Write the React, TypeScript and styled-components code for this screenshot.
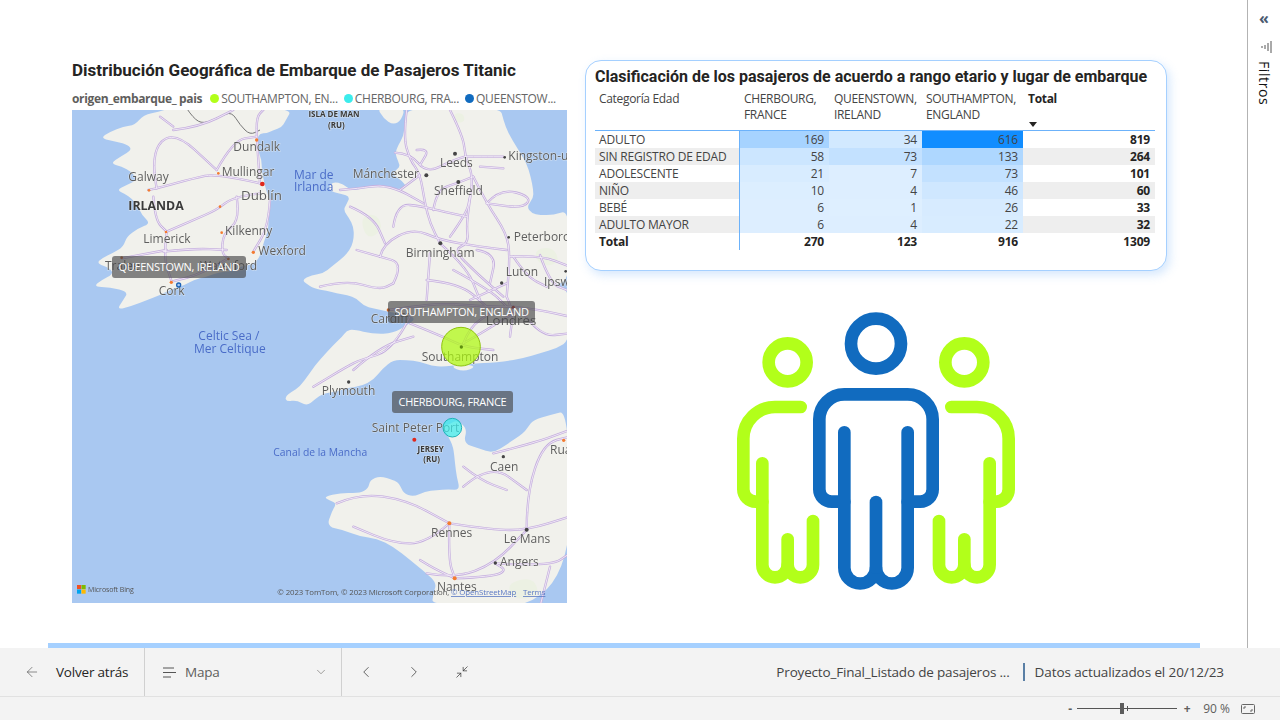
import React from "react";
import styled, { createGlobalStyle } from "styled-components";
import { ArrowLeft, ChevronDown, ChevronLeft, ChevronRight, Minimize2 } from "lucide-react";

const UI_FONT = `"Open Sans", "Noto Sans", sans-serif`;
const TITLE_FONT = `Roboto, "Liberation Sans", sans-serif`;

const GlobalStyle = createGlobalStyle`
  html, body {
    margin: 0;
    padding: 0;
    background: #fff;
    overflow: hidden;
  }
  * {
    box-sizing: border-box;
  }
`;

const Page = styled.div`
  width: 1280px;
  height: 720px;
  display: flex;
  flex-direction: column;
  font-family: ${UI_FONT};
  color: #252423;
`;

const Workspace = styled.div`
  height: 648px;
  display: flex;
`;

const Canvas = styled.main`
  flex: 1;
  display: flex;
  flex-direction: column;
`;

const Columns = styled.div`
  flex: 1;
  display: flex;
  gap: 18px;
  padding: 60px 0 0 72px;
`;

const LeftColumn = styled.section`
  width: 495px;
`;

const RightColumn = styled.section`
  width: 582px;
`;

const ChartTitle = styled.h2`
  margin: 0;
  font-family: ${TITLE_FONT};
  font-weight: 700;
  font-size: 17px;
  line-height: 20px;
  color: #252423;
  white-space: nowrap;
`;

const Legend = styled.div`
  display: flex;
  align-items: center;
  height: 20px;
  margin-top: 8px;
  font-size: 12px;
  letter-spacing: -0.3px;
  color: #666;
  white-space: nowrap;
`;

const LegendName = styled.span`
  font-weight: 700;
  letter-spacing: -0.35px;
  color: #605e5c;
  margin-right: 8px;
`;

const LegendItem = styled.span`
  display: flex;
  align-items: center;
  gap: 2px;
  margin-right: 6px;
`;

const LegendDot = styled.i<{ $color: string }>`
  width: 9px;
  height: 9px;
  border-radius: 50%;
  background: ${(p) => p.$color};
`;

const MapFrame = styled.div`
  position: relative;
  width: 495px;
  height: 493px;
  margin-top: 2px;
  overflow: hidden;
`;

const MapSvg = styled.svg`
  display: block;
  width: 495px;
  height: 493px;
  filter: blur(0.35px);
`;

const MapTip = styled.div<{ $x: number; $y: number; $w: number }>`
  position: absolute;
  left: ${(p) => p.$x}px;
  top: ${(p) => p.$y}px;
  width: ${(p) => p.$w}px;
  height: 22px;
  border-radius: 3px;
  background: rgba(70, 70, 72, 0.65);
  color: #fff;
  font-size: 11px;
  letter-spacing: -0.3px;
  line-height: 22px;
  text-align: center;
  white-space: nowrap;
`;

const TableCard = styled.div`
  height: 211px;
  border: 1px solid #a5d0ff;
  border-radius: 16px;
  background: #fff;
  box-shadow: 3px 4px 10px rgba(120, 180, 250, 0.3);
  padding: 6px 11px 0 9px;
`;

const CardTitle = styled(ChartTitle)`
  font-size: 16px;
`;

const Table = styled.table`
  width: 560px;
  margin-top: 4px;
  border-collapse: collapse;
  table-layout: fixed;
  font-size: 12px;
  letter-spacing: -0.2px;
  color: #333;
`;

const HeadCell = styled.th<{ $bold?: boolean }>`
  height: 39px;
  padding: 0 2px 0 5px;
  font-weight: ${(p) => (p.$bold ? 700 : 400)};
  line-height: 16px;
  letter-spacing: -0.32px;
  text-align: left;
  vertical-align: top;
  color: ${(p) => (p.$bold ? "#252423" : "#444")};
  border-bottom: 1px solid #6cb2fa;
  position: relative;

  &:first-child,
  &:nth-child(4) {
    padding-left: 4px;
  }
`;

const SortMark = styled.span`
  position: absolute;
  left: 6px;
  bottom: 3px;
  width: 0;
  height: 0;
  border-left: 4px solid transparent;
  border-right: 4px solid transparent;
  border-top: 5px solid #252423;
`;

const Row = styled.tr`
  height: 17px;
`;

const LabelCell = styled.td<{ $striped?: boolean; $bold?: boolean }>`
  padding: 0 0 0 4px;
  line-height: 17px;
  white-space: nowrap;
  font-weight: ${(p) => (p.$bold ? 700 : 400)};
  color: ${(p) => (p.$bold ? "#252423" : "#444")};
  background: ${(p) => (p.$striped ? "#eeeeee" : "transparent")};
  border-right: 1px solid #6cb2fa;
`;

const ValueCell = styled.td<{ $bg?: string; $bold?: boolean }>`
  padding: 0 5px 0 0;
  line-height: 17px;
  text-align: right;
  font-weight: ${(p) => (p.$bold ? 700 : 400)};
  color: ${(p) => (p.$bold ? "#252423" : "#444")};
  background: ${(p) => p.$bg ?? "transparent"};
`;

const PeopleIcon = styled.svg`
  display: block;
  width: 310px;
  height: 300px;
  margin: 29px 0 0 135px;
`;

const ProgressBar = styled.div`
  width: 1152px;
  height: 5px;
  margin-left: 48px;
  background: #a5d0ff;
`;

const FilterPane = styled.aside`
  width: 33px;
  border-left: 1px solid #b3b3b3;
  display: flex;
  flex-direction: column;
  align-items: center;
  padding-top: 11px;
`;

const CollapseMark = styled.span`
  height: 14px;
  font-size: 16px;
  font-weight: 700;
  line-height: 14px;
  color: #4a5a70;
`;

const FunnelIcon = styled.svg`
  display: block;
  width: 12px;
  height: 12px;
  margin: 16px 0 0 6px;
`;

const FilterLabel = styled.span`
  writing-mode: vertical-rl;
  margin-top: 8px;
  font-size: 14px;
  font-weight: 500;
  line-height: 18px;
  letter-spacing: 0.6px;
  color: #111;
`;

const BottomBar = styled.footer`
  height: 72px;
  background: #f3f3f3;
  display: flex;
  flex-direction: column;
`;

const NavRow = styled.nav`
  height: 49px;
  display: flex;
  align-items: stretch;
  border-bottom: 1px solid #e1e1e1;
`;

const BackButton = styled.div`
  width: 145px;
  display: flex;
  align-items: center;
  gap: 16px;
  padding-left: 24px;
  border-right: 1px solid #d0d0d0;
  font-size: 13.5px;
  letter-spacing: -0.2px;
  color: #252423;
`;

const PageSelect = styled.div`
  width: 197px;
  display: flex;
  align-items: center;
  padding: 0 13px 0 18px;
  border-right: 1px solid #d0d0d0;
  font-size: 13.5px;
  letter-spacing: -0.2px;
  color: #605e5c;
`;

const PageName = styled.span`
  flex: 1;
  margin-left: 9px;
`;

const ListIcon = styled.svg`
  display: block;
  width: 13px;
  height: 11px;
`;

const IconButton = styled.div`
  width: 48px;
  display: flex;
  align-items: center;
  justify-content: center;
  color: #555;
`;

const ReportInfo = styled.div`
  margin-left: auto;
  display: flex;
  align-items: center;
  padding-right: 56px;
  font-size: 13.5px;
  letter-spacing: -0.1px;
  color: #444;
`;

const ReportName = styled.span`
  letter-spacing: -0.18px;
`;

const InfoDivider = styled.i`
  width: 2px;
  height: 18px;
  margin: 0 10px 0 13px;
  background: #5a7fa5;
`;

const ZoomRow = styled.div`
  flex: 1;
  display: flex;
  align-items: center;
  justify-content: flex-end;
  padding-right: 25px;
  font-size: 12px;
  color: #605e5c;
`;

const ZoomSign = styled.span`
  width: 10px;
  text-align: center;
  font-weight: 700;
  line-height: 14px;
`;

const ZoomTrack = styled.div`
  position: relative;
  width: 100px;
  height: 1px;
  margin: 0 5px 0 2px;
  background: #555;
`;

const ZoomThumb = styled.i`
  position: absolute;
  left: 43px;
  top: -5px;
  width: 4px;
  height: 11px;
  background: #5c5c5c;
`;

const ZoomTick = styled.i`
  position: absolute;
  left: 50px;
  top: -2px;
  width: 1px;
  height: 5px;
  background: #555;
`;

const ZoomValue = styled.span`
  margin: 0 11px 0 11px;
`;

const FitIcon = styled.svg`
  display: block;
  width: 14px;
  height: 10px;
`;

// map drawing works in 3x coordinates, viewBox maps them onto the 495x493 frame
const smooth = (raw: string, close = true) => {
  const p = raw.trim().split(/\s+/).map((s) => s.split(",").map(Number));
  const mid = (a: number[], b: number[]) => `${(a[0] + b[0]) / 2} ${(a[1] + b[1]) / 2}`;
  if (close) {
    let d = `M${mid(p[p.length - 1], p[0])}`;
    p.forEach((c, i) => {
      d += ` Q${c[0]} ${c[1]} ${mid(c, p[(i + 1) % p.length])}`;
    });
    return d + "Z";
  }
  let d = `M${p[0][0]} ${p[0][1]}`;
  for (let i = 1; i < p.length - 1; i++) d += ` Q${p[i][0]} ${p[i][1]} ${mid(p[i], p[i + 1])}`;
  return d + ` L${p[p.length - 1][0]} ${p[p.length - 1][1]}`;
};

const LAND = [
  // Ireland
  "340,170 300,185 250,195 225,225 190,230 150,245 120,265 170,275 205,285 215,300 185,318 150,340 185,350 215,365 232,390 200,405 170,420 195,432 215,445 235,470 245,495 272,520 235,535 200,560 190,590 160,608 125,625 110,640 150,655 160,672 125,690 100,710 150,712 205,725 190,750 170,780 215,768 262,750 300,735 340,715 375,705 400,690 440,680 480,665 510,665 540,650 570,645 595,630 605,600 612,575 625,540 625,510 632,470 630,450 618,420 612,395 605,360 605,330 590,290 592,265 600,250 620,250 640,240 665,232 675,215 700,170",
  // Great Britain
  "1040,170 1035,220 1030,260 1015,285 1005,310 1015,335 1020,350 1005,362 1000,375 1025,392 1040,410 1015,418 1000,415 965,405 930,410 900,418 870,420 850,402 820,395 806,410 812,424 845,432 870,440 860,462 850,480 868,505 880,530 882,560 875,590 860,612 840,630 815,650 790,670 755,675 725,690 745,705 762,716 800,722 830,730 862,735 890,745 912,768 940,775 985,785 1040,795 1068,806 1040,826 1000,850 940,852 880,838 860,842 845,862 825,880 770,940 745,975 720,1010 695,1025 675,1040 680,1055 710,1050 740,1068 765,1048 790,1030 830,1025 870,1012 905,1008 940,990 968,955 1000,930 1040,930 1080,935 1115,948 1150,950 1200,945 1250,940 1290,938 1330,935 1390,925 1440,910 1490,895 1530,870 1530,720 1480,705 1530,690 1530,480 1480,495 1440,495 1415,490 1400,470 1420,445 1420,420 1412,380 1400,340 1372,295 1345,250 1330,210 1320,170",
  // northern France
  "1530,1080 1470,1095 1420,1110 1405,1130 1390,1150 1345,1180 1300,1210 1255,1195 1210,1180 1222,1135 1190,1110 1170,1122 1150,1130 1165,1160 1180,1190 1185,1240 1190,1280 1200,1320 1165,1318 1130,1320 1095,1325 1060,1340 1030,1330 1018,1300 1000,1290 960,1278 930,1290 925,1315 900,1330 845,1328 790,1340 810,1352 830,1360 815,1385 800,1430 850,1440 900,1460 950,1465 1000,1490 1050,1530 1100,1570 1130,1600 1120,1630 1115,1670 1530,1670",
  // Galloway
  "950,170 970,205 1000,225 1025,210 1035,170",
  // Wight
  "1170,950 1210,942 1250,950 1210,965",
];

const GREENS = [
  "1180,190 1210,190 1215,215 1190,220",
  "900,500 950,490 970,540 920,570",
  "1420,600 1480,590 1500,640 1440,650",
  "1340,1600 1420,1580 1440,1640 1360,1650",
];

const ROADS = [
  "600,400 470,370 400,385 290,415 265,420",
  "600,430 520,440 470,480 400,510 320,545",
  "320,545 310,620 335,695",
  "530,440 540,510 490,550 485,610 505,625",
  "630,450 625,530 580,605",
  "600,400 590,270 590,200 610,180",
  "505,625 430,670 335,695",
  "320,600 185,625",
  "310,605 400,595 500,600",
  "290,415 270,310 340,240 470,360",
  "340,240 420,230 520,180",
  "340,230 300,200",
  "470,360 520,270 590,260",
  "280,440 285,510 320,545",
  "1040,180 1030,260 1050,330 1080,370 1095,460 1110,520 1140,580",
  "1170,180 1210,260 1215,320 1240,380 1225,480 1220,530 1225,580 1180,600 1250,670 1330,740",
  "1215,320 1270,320 1330,320",
  "1260,350 1330,355",
  "1005,308 1050,310 1100,370 1180,330 1215,320",
  "1070,300 1110,295 1080,345",
  "1020,420 1080,375",
  "1240,380 1280,460 1340,550 1350,620 1340,740",
  "1280,460 1320,415 1415,440 1390,475 1280,460",
  "840,420 900,415 960,405 1020,420 1090,460",
  "1000,530 1010,460 1090,470 1130,480 1220,500",
  "960,620 970,580 1060,535 1140,570 1260,590 1340,600",
  "1110,610 1100,750",
  "1140,580 1220,650 1260,750",
  "1350,620 1440,615 1530,650",
  "1230,750 1340,700",
  "1120,480 1130,420 1190,400 1240,380",
  "1170,560 1220,490 1230,440",
  "1250,600 1310,610 1290,700",
  "1440,615 1470,700 1520,720",
  "1360,620 1400,680 1460,710",
  "1180,660 1290,720 1340,770",
  "1100,690 1200,700 1280,770",
  "985,780 1060,770 1150,760 1280,770 1360,770",
  "1360,790 1280,840 1210,880",
  "1360,770 1440,780 1530,800",
  "1340,740 1360,780 1350,860",
  "1390,790 1440,860 1530,850",
  "1050,800 1000,900 900,930 860,950 760,1010",
  "1050,820 1150,860 1210,890 1300,900",
  "1000,700 1030,640 960,620",
  "780,710 860,690 960,720 1000,700",
  "880,960 960,890 1060,860",
  "1210,880 1230,830 1290,790",
  "870,470 940,500 975,580",
  "890,600 960,620",
  "830,1360 900,1330 1040,1350 1168,1420",
  "1168,1420 1100,1480 1000,1480 880,1430",
  "1168,1420 1165,1530 1185,1585",
  "1100,1570 1185,1585 1305,1540 1400,1440",
  "1168,1420 1300,1440 1400,1440 1530,1400",
  "1400,1440 1400,1330 1450,1180 1530,1160",
  "1210,1310 1290,1240 1400,1320",
  "1300,1210 1420,1180 1530,1140",
  "1305,1540 1470,1550 1530,1510",
  "1470,1550 1440,1670",
  "1185,1585 1300,1580 1340,1560 1305,1540",
  "1185,1585 1130,1560 1080,1530",
  "1210,1250 1260,1290 1340,1320",
];

type MapLabel = { t: string; x: number; y: number; s?: number; blue?: boolean; bold?: boolean; mid?: boolean };

const MAP_TEXT: MapLabel[] = [
  { t: "ISLA DE MAN", x: 822, y: 202, s: 24, bold: true, mid: true },
  { t: "(RU)", x: 829, y: 233, s: 24, bold: true, mid: true },
  { t: "Dundalk", x: 520, y: 302 },
  { t: "Mullingar", x: 485, y: 378 },
  { t: "Galway", x: 205, y: 393 },
  { t: "Dublín", x: 543, y: 450, s: 40 },
  { t: "IRLANDA", x: 205, y: 480, s: 37, bold: true },
  { t: "Limerick", x: 250, y: 578 },
  { t: "Kilkenny", x: 495, y: 556 },
  { t: "Wexford", x: 595, y: 615 },
  { t: "Tralee", x: 135, y: 660 },
  { t: "Waterford", x: 420, y: 660 },
  { t: "Cork", x: 296, y: 736 },
  { t: "Mar de", x: 702, y: 386, blue: true },
  { t: "Irlanda", x: 702, y: 423, blue: true },
  { t: "Mánchester", x: 878, y: 383 },
  { t: "Leeds", x: 1140, y: 350 },
  { t: "Sheffield", x: 1122, y: 436 },
  { t: "Kingston-upon", x: 1345, y: 330 },
  { t: "Peterborough", x: 1361, y: 572 },
  { t: "Birmingham", x: 1037, y: 620 },
  { t: "Luton", x: 1337, y: 678 },
  { t: "Ipswich", x: 1452, y: 707 },
  { t: "Cardiff", x: 932, y: 818 },
  { t: "Londres", x: 1277, y: 825, s: 40 },
  { t: "Celtic Sea /", x: 415, y: 870, blue: true },
  { t: "Mer Celtique", x: 402, y: 910, blue: true },
  { t: "Southampton", x: 1085, y: 933 },
  { t: "Plymouth", x: 785, y: 1036 },
  { t: "Saint Peter Port", x: 935, y: 1145 },
  { t: "JERSEY", x: 1112, y: 1206, s: 24, bold: true, mid: true },
  { t: "(RU)", x: 1115, y: 1236, s: 24, bold: true, mid: true },
  { t: "Canal de la Mancha", x: 640, y: 1217, blue: true, s: 31 },
  { t: "Caen", x: 1290, y: 1262 },
  { t: "Ruan", x: 1470, y: 1212 },
  { t: "Rennes", x: 1113, y: 1460 },
  { t: "Le Mans", x: 1331, y: 1478 },
  { t: "Angers", x: 1320, y: 1548 },
  { t: "Nantes", x: 1131, y: 1622 },
];

const MAP_DOTS = [
  [590, 270, 5, "#f47b30"], [475, 370, 4, "#f47b30"], [607, 402, 7, "#e0281c"], [267, 421, 4, "#f47b30"],
  [480, 470, 4, "#f47b30"], [318, 546, 4, "#f47b30"], [485, 548, 4, "#f47b30"], [580, 607, 5, "#f47b30"],
  [185, 623, 4, "#c8632a"], [505, 627, 4, "#c8632a"], [334, 697, 5, "#f47b30"], [1185, 311, 6, "#444"],
  [1099, 376, 6, "#444"], [1195, 396, 6, "#444"], [1334, 322, 4, "#444"], [1346, 562, 4, "#444"],
  [1141, 580, 6, "#444"], [1325, 699, 5, "#444"], [1517, 664, 4, "#444"], [985, 780, 5, "#c8632a"],
  [1360, 772, 5, "#c0392b"], [866, 996, 5, "#444"], [1063, 1169, 6, "#e0281c"],
  [1330, 1220, 5, "#444"], [1511, 1171, 5, "#f47b30"], [1168, 1420, 6, "#f47b30"], [1400, 1439, 6, "#444"],
  [1306, 1539, 5, "#444"], [1184, 1585, 6, "#f47b30"],
] as const;

const MapText = styled.text<{ $s: number; $blue?: boolean; $bold?: boolean; $mid?: boolean }>`
  font-family: ${UI_FONT};
  font-size: ${(p) => p.$s}px;
  font-weight: ${(p) => (p.$bold ? 700 : 400)};
  fill: ${(p) => (p.$blue ? "#4a6cc8" : p.$bold ? "#3a3a3a" : "#5e5e5e")};
  text-anchor: ${(p) => (p.$mid ? "middle" : "start")};
  stroke: ${(p) => (p.$blue ? "none" : "rgba(245,245,240,.55)")};
  stroke-width: 3px;
  paint-order: stroke;
`;

const MapCaption = styled.text<{ $link?: boolean; $s?: number }>`
  font-family: ${UI_FONT};
  font-size: ${(p) => p.$s ?? 23.5}px;
  fill: ${(p) => (p.$link ? "#5a78c4" : "#555")};
  text-decoration: ${(p) => (p.$link ? "underline" : "none")};
  letter-spacing: -0.3px;
`;

const Road = styled.path<{ $core?: boolean }>`
  fill: none;
  stroke: ${(p) => (p.$core ? "#f6f1fa" : "#c4aedd")};
  stroke-width: ${(p) => (p.$core ? 2.5 : 7)};
  stroke-linecap: round;
  stroke-linejoin: round;
`;

const MapBackdrop = () => (
  <MapSvg viewBox="36 180 1485 1479" aria-hidden>
    <rect x="36" y="180" width="1485" height="1479" fill="#a9c8f1" />
    {LAND.map((d, i) => (
      <path key={i} d={smooth(d)} fill="#f1f1ec" />
    ))}
    {GREENS.map((d, i) => (
      <path key={i} d={smooth(d)} fill="#ecf1e3" />
    ))}
    <path d={smooth("380,175 400,205 430,222 480,200 515,185 540,225 570,255 600,240", false)} fill="none" stroke="#777" strokeWidth="3" />
    {ROADS.map((d, i) => (
      <Road key={i} d={smooth(d, false)} />
    ))}
    {ROADS.map((d, i) => (
      <Road key={i} $core d={smooth(d, false)} />
    ))}
    {MAP_DOTS.map(([x, y, r, c], i) => (
      <circle key={i} cx={x} cy={y} r={r} fill={c} />
    ))}
    {MAP_TEXT.map((m) => (
      <MapText key={m.t + m.x} x={m.x} y={m.y} $s={m.s ?? 36} $blue={m.blue} $bold={m.bold} $mid={m.mid}>
        {m.t}
      </MapText>
    ))}
    <circle cx="1203" cy="890" r="58" fill="rgba(175,250,15,0.72)" stroke="#8fc30f" strokeWidth="3" />
    <circle cx="1204" cy="891" r="5" fill="#5f8f10" />
    <circle cx="1177" cy="1133" r="28" fill="rgba(60,235,235,0.72)" stroke="#22b3b8" strokeWidth="3" />
    <circle cx="356" cy="705" r="6" fill="#a9c8f1" stroke="#1a62b8" strokeWidth="4" />
    <rect x="51" y="1605" width="12.5" height="12.5" fill="#f25022" />
    <rect x="64.5" y="1605" width="12.5" height="12.5" fill="#7fba00" />
    <rect x="51" y="1618.5" width="12.5" height="12.5" fill="#00a4ef" />
    <rect x="64.5" y="1618.5" width="12.5" height="12.5" fill="#ffb900" />
    <MapCaption x="84" y="1626" $s={21}>Microsoft Bing</MapCaption>
    <MapCaption x="652" y="1635">© 2023 TomTom, © 2023 Microsoft Corporation,</MapCaption>
    <MapCaption x="1173" y="1635" $link>© OpenStreetMap</MapCaption>
    <MapCaption x="1389" y="1635" $link>Terms</MapCaption>
  </MapSvg>
);

const LegendEntry = ({ color, label }: { color: string; label: string }) => (
  <LegendItem>
    <LegendDot $color={color} />
    {label}
  </LegendItem>
);

const AGE_ROWS = [
  { name: "ADULTO", cells: [[169, "#a6d3ff"], [34, "#d2e9ff"], [616, "#118dff"]], total: 819 },
  { name: "SIN REGISTRO DE EDAD", cells: [[58, "#cce6ff"], [73, "#c3e1ff"], [133, "#aed7ff"]], total: 264 },
  { name: "ADOLESCENTE", cells: [[21, "#d8ecff"], [7, "#ddeeff"], [73, "#c3e1ff"]], total: 101 },
  { name: "NIÑO", cells: [[10, "#dceeff"], [4, "#ddeeff"], [46, "#cfe7ff"]], total: 60 },
  { name: "BEBÉ", cells: [[6, "#ddeeff"], [1, "#deefff"], [26, "#d7ebff"]], total: 33 },
  { name: "ADULTO MAYOR", cells: [[6, "#ddeeff"], [4, "#ddeeff"], [22, "#d8ecff"]], total: 32 },
] as const;

const AgeTable = () => (
  <Table>
    <colgroup>
      <col width="144" />
      <col width="90" />
      <col width="93" />
      <col width="101" />
      <col width="132" />
    </colgroup>
    <thead>
      <tr>
        <HeadCell>Categoría Edad</HeadCell>
        <HeadCell>CHERBOURG, FRANCE</HeadCell>
        <HeadCell>QUEENSTOWN, IRELAND</HeadCell>
        <HeadCell>SOUTHAMPTON, ENGLAND</HeadCell>
        <HeadCell $bold>
          Total
          <SortMark />
        </HeadCell>
      </tr>
    </thead>
    <tbody>
      {AGE_ROWS.map((row, i) => (
        <Row key={row.name}>
          <LabelCell $striped={i % 2 === 1}>{row.name}</LabelCell>
          {row.cells.map(([value, bg], c) => (
            <ValueCell key={c} $bg={bg}>
              {value}
            </ValueCell>
          ))}
          <ValueCell $bold $bg={i % 2 === 1 ? "#eeeeee" : undefined}>
            {row.total}
          </ValueCell>
        </Row>
      ))}
      <Row>
        <LabelCell $bold>Total</LabelCell>
        <ValueCell $bold>270</ValueCell>
        <ValueCell $bold>123</ValueCell>
        <ValueCell $bold>916</ValueCell>
        <ValueCell $bold>1309</ValueCell>
      </Row>
    </tbody>
  </Table>
);

const SidePerson = () => (
  <g fill="none" stroke="#b2ff1a" strokeWidth="38" strokeLinecap="round" strokeLinejoin="round">
    <circle cx="203" cy="187" r="57" />
    <path d="M242 321H165A95 95 0 0 0 70 416V568A37 37 0 0 0 107 605H127" />
    <path d="M127 490V794A38 38 0 0 0 203 794A38 38 0 0 0 279 794V663" />
    <path d="M203 718V794" />
  </g>
);

const People = () => (
  <PeopleIcon viewBox="0 0 930 900" aria-hidden>
    <SidePerson />
    <g transform="translate(936 0) scale(-1 1)">
      <SidePerson />
    </g>
    <g fill="none" stroke="#116bbf" strokeWidth="38" strokeLinecap="round" strokeLinejoin="round">
      <circle cx="468" cy="131" r="75" />
      <path d="M373 605H335A37 37 0 0 1 298 568V358A75 75 0 0 1 373 283H563A75 75 0 0 1 638 358V568A37 37 0 0 1 601 605H563" />
      <path d="M373 397V803A47.5 47.5 0 0 0 468 803A47.5 47.5 0 0 0 563 803V397" />
      <path d="M468 606V803" />
    </g>
  </PeopleIcon>
);

export default function App() {
  return (
    <Page>
      <GlobalStyle />
      <Workspace>
        <Canvas>
          <Columns>
            <LeftColumn>
              <ChartTitle>Distribución Geográfica de Embarque de Pasajeros Titanic</ChartTitle>
              <Legend>
                <LegendName>origen_embarque_ pais</LegendName>
                <LegendEntry color="#b2ff1a" label="SOUTHAMPTON, EN..." />
                <LegendEntry color="#3cecec" label="CHERBOURG, FRA..." />
                <LegendEntry color="#116bbf" label="QUEENSTOW..." />
              </Legend>
              <MapFrame>
                <MapBackdrop />
                <MapTip $x={40} $y={146} $w={134}>QUEENSTOWN, IRELAND</MapTip>
                <MapTip $x={316} $y={191} $w={147}>SOUTHAMPTON, ENGLAND</MapTip>
                <MapTip $x={320} $y={281} $w={121}>CHERBOURG, FRANCE</MapTip>
              </MapFrame>
            </LeftColumn>
            <RightColumn>
              <TableCard>
                <CardTitle>Clasificación de los pasajeros de acuerdo a rango etario y lugar de embarque</CardTitle>
                <AgeTable />
              </TableCard>
              <People />
            </RightColumn>
          </Columns>
          <ProgressBar />
        </Canvas>
        <FilterPane>
          <CollapseMark>«</CollapseMark>
          <FunnelIcon viewBox="0 0 12 12" aria-hidden>
            <path d="M1 5v2M4 4v4M7 2v8M10 0v12" stroke="#555" strokeWidth="1" fill="none" />
          </FunnelIcon>
          <FilterLabel>Filtros</FilterLabel>
        </FilterPane>
      </Workspace>
      <BottomBar>
        <NavRow>
          <BackButton>
            <ArrowLeft size={16} strokeWidth={1} color="#555" />
            Volver atrás
          </BackButton>
          <PageSelect>
            <ListIcon viewBox="0 0 13 11" aria-hidden>
              <path d="M0 1h11M0 5.5h13M0 10h8" stroke="#555" strokeWidth="1" fill="none" />
            </ListIcon>
            <PageName>Mapa</PageName>
            <ChevronDown size={14} strokeWidth={1} />
          </PageSelect>
          <IconButton>
            <ChevronLeft size={18} strokeWidth={1.2} />
          </IconButton>
          <IconButton>
            <ChevronRight size={18} strokeWidth={1.2} />
          </IconButton>
          <IconButton>
            <Minimize2 size={14} strokeWidth={1.2} color="#333" />
          </IconButton>
          <ReportInfo>
            <ReportName>Proyecto_Final_Listado de pasajeros ...</ReportName>
            <InfoDivider />
            <span>Datos actualizados el 20/12/23</span>
          </ReportInfo>
        </NavRow>
        <ZoomRow>
          <ZoomSign>-</ZoomSign>
          <ZoomTrack>
            <ZoomThumb />
            <ZoomTick />
          </ZoomTrack>
          <ZoomSign>+</ZoomSign>
          <ZoomValue>90 %</ZoomValue>
          <FitIcon viewBox="0 0 14 10" aria-hidden>
            <rect x="0.5" y="0.5" width="13" height="9" rx="1" fill="none" stroke="#666" />
            <path d="M3 5V3h2M11 5v2H9" fill="none" stroke="#666" />
          </FitIcon>
        </ZoomRow>
      </BottomBar>
    </Page>
  );
}
